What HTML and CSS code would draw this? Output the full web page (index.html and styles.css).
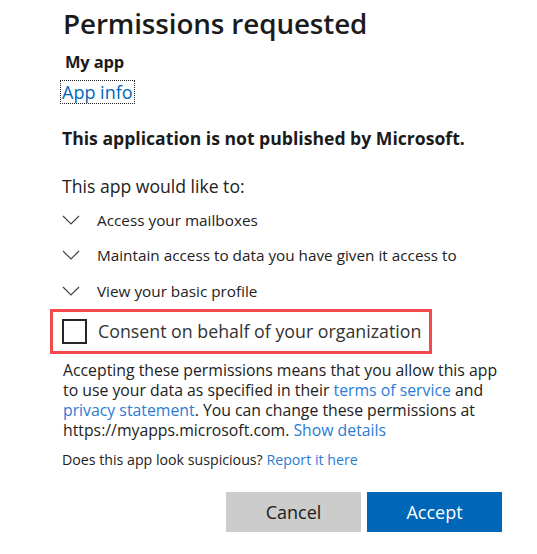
FILE: index.html
```html
<!DOCTYPE HTML>
<html>
<head>
  <meta charset="UTF-8">
  <title>Permissions requested</title>
  <meta name="viewport" content="width=device-width, initial-scale=1">
  <link rel="stylesheet" href="styles.css">
</head>
<body>
  <div class="dialog">
    <h1>Permissions requested</h1>
    <div class="app-name">My app</div>
    <a href="#" class="app-info">App info</a>

    <p class="publisher">This application is not published by Microsoft.</p>

    <p class="lead">This app would like to:</p>
    <ul class="scopes">
      <li><svg class="chevron" viewBox="0 0 18 10"><polyline points="1,1 9,9 17,1"/></svg>Access your mailboxes</li>
      <li><svg class="chevron" viewBox="0 0 18 10"><polyline points="1,1 9,9 17,1"/></svg>Maintain access to data you have given it access to</li>
      <li><svg class="chevron" viewBox="0 0 18 10"><polyline points="1,1 9,9 17,1"/></svg>View your basic profile</li>
    </ul>

    <label class="consent">
      <span class="checkbox"></span>
      Consent on behalf of your organization
    </label>

    <p class="terms">Accepting these permissions means that you allow this app to use your data as specified in their <a href="#">terms of service</a> and <a href="#">privacy statement</a>. You can change these permissions at https://myapps.microsoft.com. <a href="#">Show details</a></p>

    <p class="report">Does this app look suspicious? <a href="#">Report it here</a></p>

    <div class="actions">
      <button class="btn btn-cancel">Cancel</button>
      <button class="btn btn-accept">Accept</button>
    </div>
  </div>
</body>
</html>
```

FILE: styles.css
```css
body {
  margin: 0;
  background: #fff;
  font-family: 'Open Sans', 'Noto Sans', sans-serif;
  color: #1b1b1b;
}

.dialog {
  width: 440px;
  padding: 3px 0 0 62px;
}

h1 {
  font-size: 27.8px;
  font-weight: 600;
  margin: 0 0 0 1px;
  line-height: 40px;
  letter-spacing: -0.1px;
}

.app-name {
  font-weight: 700;
  font-size: 16.5px;
  margin: 7px 0 0 3px;
  letter-spacing: -0.2px;
}

.app-info {
  display: inline-block;
  margin-top: 8px;
  font-size: 18px;
  color: #0067b8;
  text-decoration: none;
  outline: 1px dotted #222;
  line-height: 22px;
  padding: 0 1px;
  margin-left: -1px;
}

a { color: #2b7cd3; text-decoration: none; }

.publisher {
  font-weight: 700;
  font-size: 17.6px;
  margin: 22px 0 0 0;
}

.lead {
  font-size: 17.6px;
  margin: 24px 0 0 0;
  color: #222;
}

.scopes {
  list-style: none;
  padding: 0;
  margin: 4px 0 0 0;
}

.scopes li {
  display: flex;
  align-items: center;
  height: 35.5px;
  font-size: 15.3px;
  color: #222;
}

.chevron {
  width: 18px;
  height: 10px;
  margin-right: 17px;
  fill: none;
  stroke: #444;
  stroke-width: 1.2;
}

.consent {
  display: flex;
  align-items: center;
  margin: 0 0 0 -12px;
  width: 367px;
  height: 39px;
  border: 3px solid #f4494c;
  padding-left: 9px;
  font-size: 17.8px;
  color: #333;
}

.checkbox {
  width: 21px;
  height: 21px;
  border: 2px solid #262626;
  margin-right: 11px;
}

.terms {
  font-size: 15.8px;
  line-height: 20px;
  margin: 6px 0 0 1px;
  color: #222;
}

.report {
  font-size: 14.2px;
  line-height: 18px;
  margin: 11px 0 0 0;
  color: #222;
}

.actions {
  display: flex;
  justify-content: flex-end;
  gap: 6px;
  margin: 23px 0 0 0;
}

.btn {
  width: 135px;
  height: 40px;
  border: none;
  font-family: inherit;
  font-size: 18px;
  cursor: pointer;
}

.btn-cancel { background: #cccccc; color: #1b1b1b; }
.btn-accept { background: #0067b8; color: #fff; }
```
